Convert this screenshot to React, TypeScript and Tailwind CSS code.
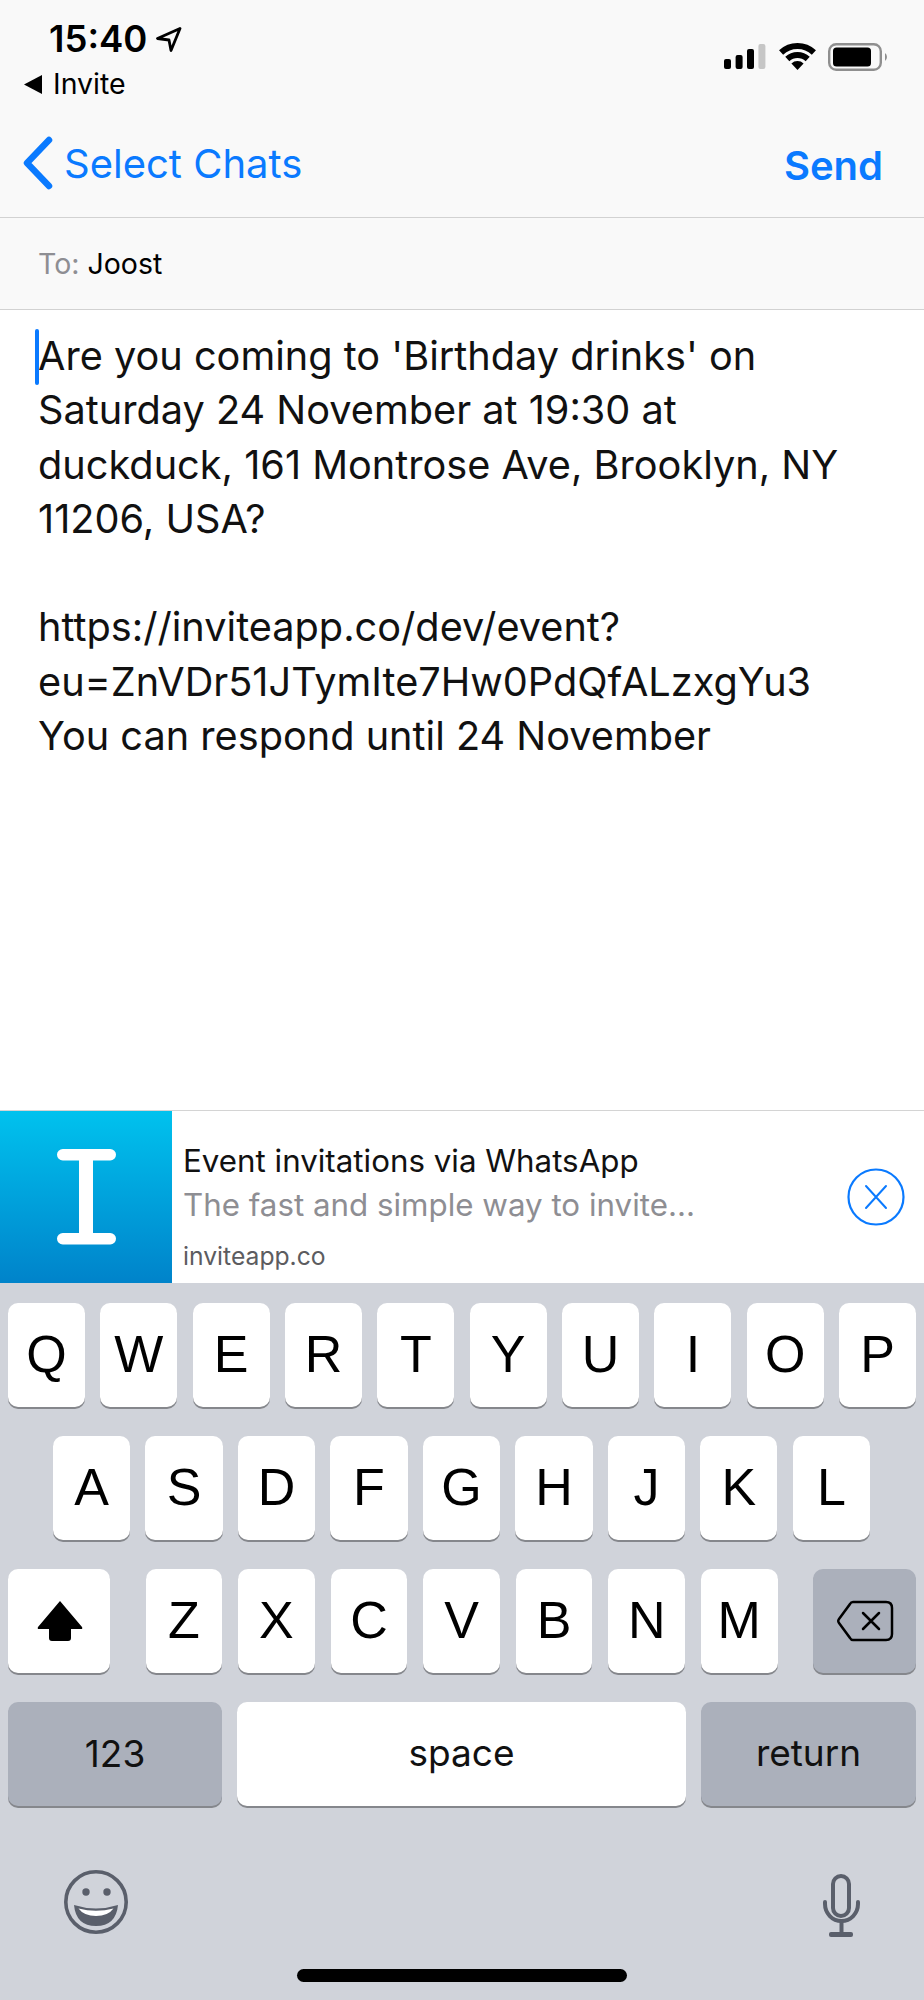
const rowOne = ["Q", "W", "E", "R", "T", "Y", "U", "I", "O", "P"];
const rowTwo = ["A", "S", "D", "F", "G", "H", "J", "K", "L"];
const rowThree = ["Z", "X", "C", "V", "B", "N", "M"];

const bodyLines = [
  "Are you coming to 'Birthday drinks' on",
  "Saturday 24 November at 19:30 at",
  "duckduck, 161 Montrose Ave, Brooklyn, NY",
  "11206, USA?",
  "\u00a0",
  "https://inviteapp.co/dev/event?",
  "eu=ZnVDr51JTymIte7Hw0PdQfALzxgYu3",
  "You can respond until 24 November",
];

function Key({ label }: { label: string }) {
  return (
    <div className="flex h-[104px] flex-1 items-center justify-center rounded-[10px] bg-white pb-[2px] font-['Liberation_Sans',sans-serif] text-[52px] leading-none text-black shadow-[0_2px_0_#85878c]">
      {label}
    </div>
  );
}

function StatusIcons() {
  return (
    <div className="mt-[43px] flex items-start">
      <svg width="42" height="28" viewBox="0 0 42 28" className="mr-[13px]">
        <rect x="0" y="16" width="7" height="10" rx="2" fill="#000" />
        <rect x="11.6" y="12" width="7" height="14" rx="2" fill="#000" />
        <rect x="23" y="6" width="7" height="20" rx="2" fill="#000" />
        <rect x="34.4" y="1" width="7" height="25" rx="2" fill="#c6c6c6" />
      </svg>
      <svg width="37" height="28" viewBox="0 0 37 28" className="mr-[12px]">
        <path d="M2.1 9.5 A24 24 0 0 1 34.9 9.5" fill="none" stroke="#000" strokeWidth="6" />
        <path d="M8.3 16 A15 15 0 0 1 28.7 16" fill="none" stroke="#000" strokeWidth="6" />
        <path d="M18.5 27 L12.4 20.4 A9 9 0 0 1 24.6 20.4 Z" fill="#000" />
      </svg>
      <svg width="60" height="28" viewBox="0 0 60 28">
        <rect x="1.2" y="1.2" width="51.6" height="25.6" rx="7" fill="none" stroke="#8f8f8f" strokeWidth="2.4" />
        <rect x="5" y="4.5" width="38" height="19" rx="3.5" fill="#000" />
        <path d="M57 10 A5 5 0 0 1 57 18 Z" fill="#8f8f8f" />
      </svg>
    </div>
  );
}

function Banner() {
  return (
    <div className="flex h-[173px] items-stretch border-t border-[#d4d4d4] bg-white">
      <div className="flex w-[172px] items-center justify-center bg-gradient-to-b from-[#00c2ee] to-[#0083ca]">
        <svg width="60" height="96" viewBox="0 0 60 96">
          <rect x="1" y="0" width="59" height="11.5" rx="5.75" fill="#fff" />
          <rect x="23" y="5" width="14" height="86" fill="#fff" />
          <rect x="1" y="84" width="59" height="11.5" rx="5.75" fill="#fff" />
        </svg>
      </div>
      <div className="flex-1 pl-[11px] font-['Inter',sans-serif]">
        <p className="mt-[30px] whitespace-nowrap text-[31.3px] leading-[40px] text-[#111]">Event invitations via WhatsApp</p>
        <p className="mt-[4px] whitespace-nowrap text-[31.3px] leading-[40px] text-[#8e8e93]">The fast and simple way to invite...</p>
        <p className="mt-[16px] text-[24.7px] leading-[30px] text-[#5c5c60]">inviteapp.co</p>
      </div>
      <div className="flex items-center pr-[19px]">
        <svg width="58" height="58" viewBox="0 0 58 58">
          <circle cx="29" cy="29" r="27.5" fill="none" stroke="#0a7aff" strokeWidth="2.2" />
          <path d="M19 18 L39 40 M39 18 L19 40" stroke="#0a7aff" strokeWidth="2" strokeLinecap="round" />
        </svg>
      </div>
    </div>
  );
}

function Keyboard() {
  return (
    <div className="h-[717px] bg-[#d0d3da] pt-[20px]">
      <div className="flex gap-[15.4px] px-[8px]">
        {rowOne.map((k) => (
          <Key key={k} label={k} />
        ))}
      </div>
      <div className="mt-[29px] flex gap-[15.4px] pl-[53px] pr-[54px]">
        {rowTwo.map((k) => (
          <Key key={k} label={k} />
        ))}
      </div>
      <div className="mt-[29px] flex justify-between px-[8px]">
        <div className="flex h-[104px] w-[102px] items-center justify-center rounded-[10px] bg-white pl-[2px] shadow-[0_2px_0_#85878c]">
          <svg width="48" height="42" viewBox="0 0 48 42">
            <path d="M24 1 L46 27 Q47 29 45 29 L35 29 L35 38 Q35 41 32 41 L16 41 Q13 41 13 38 L13 29 L3 29 Q1 29 2 27 Z" fill="#000" />
          </svg>
        </div>
        <div className="flex w-[632px] gap-[16px]">
          {rowThree.map((k) => (
            <Key key={k} label={k} />
          ))}
        </div>
        <div className="flex h-[104px] w-[103px] items-center justify-center rounded-[10px] bg-[#abb0bb] shadow-[0_2px_0_#85878c]">
          <svg width="58" height="42" viewBox="0 0 58 42">
            <path d="M17 2 L50 2 Q56 2 56 8 L56 34 Q56 40 50 40 L17 40 Q15 40 14 38 L3 23 Q1.5 21 3 19 L14 4 Q15 2 17 2 Z" fill="none" stroke="#000" strokeWidth="2.5" />
            <path d="M27 13 L43 29 M43 13 L27 29" stroke="#000" strokeWidth="2.5" strokeLinecap="round" />
          </svg>
        </div>
      </div>
      <div className="mt-[29px] flex justify-between px-[8px] font-['Inter',sans-serif] text-[37px] leading-none text-[#111]">
        <div className="flex h-[104px] w-[214px] items-center justify-center rounded-[10px] bg-[#abb0bb] pb-[2px] shadow-[0_2px_0_#85878c]">123</div>
        <div className="flex h-[104px] w-[449px] items-center justify-center rounded-[10px] bg-white pb-[3px] shadow-[0_2px_0_#85878c]">space</div>
        <div className="flex h-[104px] w-[215px] items-center justify-center rounded-[10px] bg-[#abb0bb] pb-[3px] shadow-[0_2px_0_#85878c]">return</div>
      </div>
      <div className="mt-[61px] flex items-start justify-between pl-[64px] pr-[64px]">
        <svg width="64" height="64" viewBox="0 0 64 64" className="mt-[3px]">
          <circle cx="32" cy="32" r="30.2" fill="none" stroke="#5a5f6b" strokeWidth="3.6" />
          <circle cx="22" cy="22" r="3.7" fill="#5a5f6b" />
          <circle cx="43" cy="22" r="3.7" fill="#5a5f6b" />
          <path d="M10 35 Q32 42 54 35 Q52 56 32 56 Q12 56 10 35 Z" fill="#5a5f6b" />
          <path d="M14.5 38.5 Q32 43 49.5 38.5 Q44 46 32 46 Q20 46 14.5 38.5 Z" fill="#fff" />
        </svg>
        <svg width="38" height="64" viewBox="0 0 38 64" className="mt-[7px]">
          <rect x="11" y="2" width="16" height="40" rx="8" fill="none" stroke="#5a5f6b" strokeWidth="4" />
          <path d="M3 28 L3 30 A16.5 17 0 0 0 36 30 L36 28" fill="none" stroke="#5a5f6b" strokeWidth="4" strokeLinecap="round" />
          <path d="M19.5 47 L19.5 59" stroke="#5a5f6b" strokeWidth="4" />
          <rect x="7" y="58" width="24" height="5" rx="2" fill="#5a5f6b" />
        </svg>
      </div>
      <div className="mx-auto mt-[31px] h-[13px] w-[330px] rounded-full bg-black" />
    </div>
  );
}

export default function App() {
  return (
    <div className="mx-auto flex h-[2000px] w-[924px] flex-col overflow-hidden bg-white font-['Inter',sans-serif]">
      {/* nav */}
      <header className="h-[218px] border-b border-[#d2d2d2] bg-[#f9f9f9]">
        <div className="flex h-[130px] justify-between pr-[36px]">
          <div>
            <div className="mt-[18px] flex items-center pl-[49px]">
              <span className="text-[36.5px] font-semibold leading-[42px] text-black">15:40</span>
              <svg width="26" height="25" viewBox="0 0 26 25" className="ml-[9px]">
                <path d="M24 1.5 L1.5 11.5 L13 13 L15 23.5 Z" fill="none" stroke="#000" strokeWidth="2.8" strokeLinejoin="round" />
              </svg>
            </div>
            <div className="mt-[9px] flex items-center pl-[24px]">
              <svg width="18" height="19" viewBox="0 0 18 19">
                <path d="M18 0 L18 19 L0 9.5 Z" fill="#000" />
              </svg>
              <span className="ml-[11px] text-[28.5px] leading-[30px] text-black">Invite</span>
            </div>
          </div>
          <StatusIcons />
        </div>
        <div className="flex items-start justify-between pl-[22px] pr-[41px] text-[#0a7aff]">
          <div className="flex items-center">
            <svg width="32" height="54" viewBox="0 0 32 54" className="mt-[6px]">
              <path d="M27 4 L5 27 L27 50" fill="none" stroke="#0a7aff" strokeWidth="6.5" strokeLinecap="round" strokeLinejoin="round" />
            </svg>
            <span className="ml-[10px] mt-[8px] text-[40px] leading-[48px]">Select Chats</span>
          </div>
          <span className="mt-[12px] text-[40px] font-semibold leading-[48px]">Send</span>
        </div>
      </header>

      <div className="flex h-[92px] items-center border-b border-[#d2d2d2] bg-[#f9f9f9] pl-[38px] pt-[2px] text-[28.5px]">
        <span className="text-[#8e8e93]">To:</span>
        <span className="ml-[8px] text-black">Joost</span>
      </div>

      {/* message */}
      <main className="relative flex-1 pl-[38px] pt-[19px] text-[39.7px] leading-[54.3px] text-[#111]">
        <div className="absolute left-[35px] top-[19px] h-[56px] w-[4px] rounded-full bg-[#0a7aff]" />
        {bodyLines.map((line, i) => (
          <div key={i} className="whitespace-nowrap">
            {line}
          </div>
        ))}
      </main>

      <Banner />
      <Keyboard />
    </div>
  );
}
